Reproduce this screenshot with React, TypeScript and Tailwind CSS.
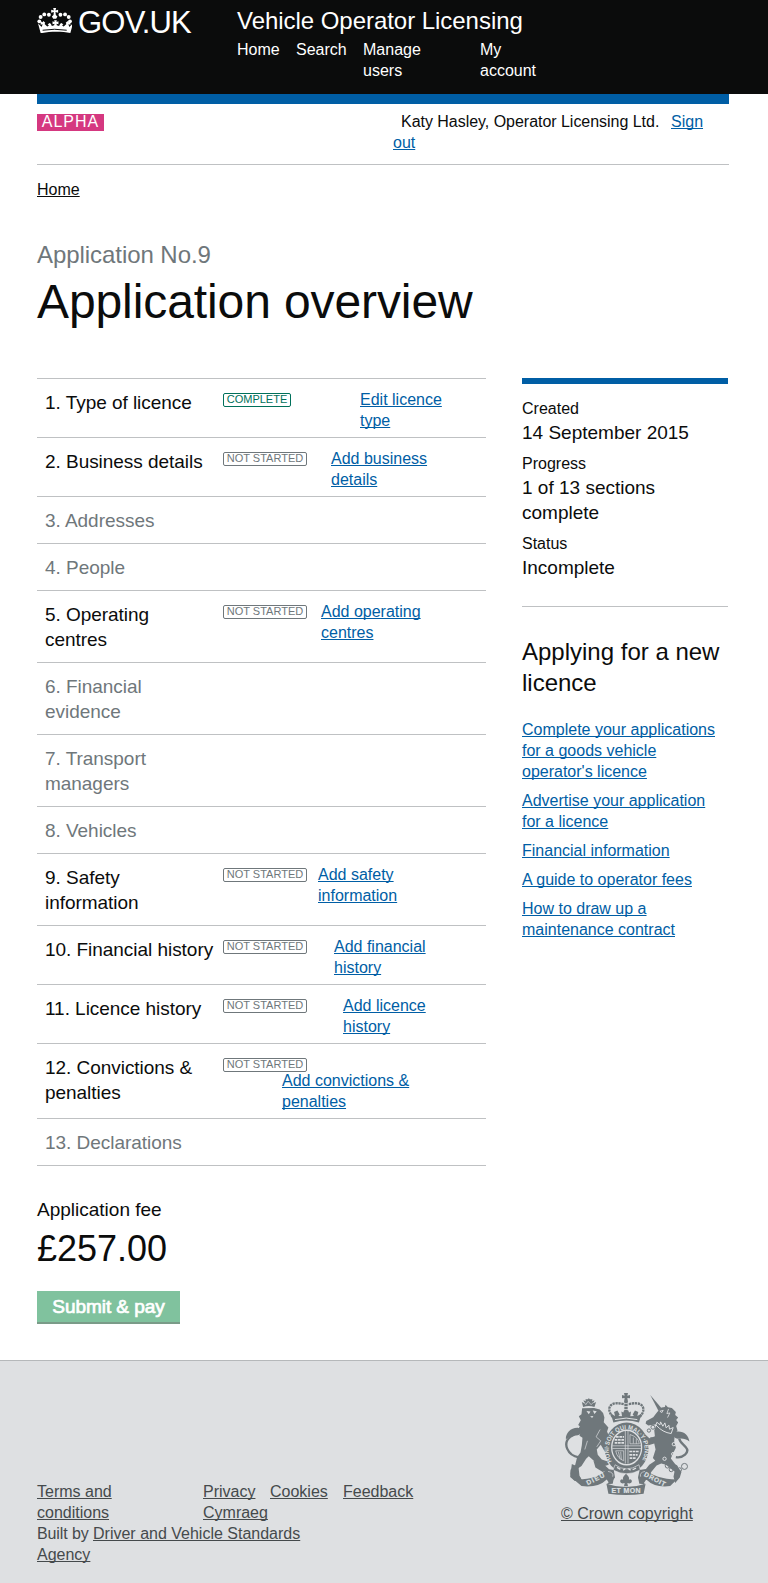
import React from "react";

const link = "text-[#005ea5] underline decoration-1 underline-offset-[1px] [text-decoration-skip-ink:none]";
const footLink = "underline decoration-1 underline-offset-[1px] [text-decoration-skip-ink:none]";

type Section = {
  name: string;
  status?: string;
  action?: string;
  height: string;
  indent?: string;
  stacked?: boolean;
};

const sections: Section[] = [
  { name: "1. Type of licence", status: "COMPLETE", action: "Edit licence\ntype", height: "h-[59px]", indent: "ml-[69px]" },
  { name: "2. Business details", status: "NOT STARTED", action: "Add business\ndetails", height: "h-[59px]", indent: "ml-[24px]" },
  { name: "3. Addresses", height: "h-[47px]" },
  { name: "4. People", height: "h-[47px]" },
  { name: "5. Operating\ncentres", status: "NOT STARTED", action: "Add operating\ncentres", height: "h-[72px]", indent: "ml-[14px]" },
  { name: "6. Financial\nevidence", height: "h-[72px]" },
  { name: "7. Transport\nmanagers", height: "h-[72px]" },
  { name: "8. Vehicles", height: "h-[47px]" },
  { name: "9. Safety\ninformation", status: "NOT STARTED", action: "Add safety\ninformation", height: "h-[72px]", indent: "ml-[11px]" },
  { name: "10. Financial history", status: "NOT STARTED", action: "Add financial\nhistory", height: "h-[59px]", indent: "ml-[27px]" },
  { name: "11. Licence history", status: "NOT STARTED", action: "Add licence\nhistory", height: "h-[59px]", indent: "ml-[36px]" },
  { name: "12. Convictions &\npenalties", status: "NOT STARTED", action: "Add convictions &\npenalties", height: "h-[75px]", indent: "ml-[59px]", stacked: true },
  { name: "13. Declarations", height: "h-[47px]" },
];

const guides = [
  "Complete your applications\nfor a goods vehicle\noperator's licence",
  "Advertise your application\nfor a licence",
  "Financial information",
  "A guide to operator fees",
  "How to draw up a\nmaintenance contract",
];

function CrownLogo() {
  return (
    <svg viewBox="110 24 106 78" className="h-[26px] w-[35px] shrink-0" fill="#fff">
      <circle cx="117" cy="64" r="5.8" />
      <circle cx="121" cy="51" r="5.8" />
      <circle cx="132" cy="43" r="5.8" />
      <circle cx="146" cy="44" r="5.8" />
      <circle cx="181" cy="44" r="5.8" />
      <circle cx="195" cy="43" r="5.8" />
      <circle cx="206" cy="51" r="5.8" />
      <circle cx="210" cy="64" r="5.8" />
      <path d="M159 24h9l-2 7 8-2v9l-8-2 1 9 5 4-4 7h-9l-4-7 5-4 1-9-8 2v-9l8 2z" />
      <path d="M121 99 113 70l11 11 3-8-6 1v-9l6 2 2-4 6 5-2 4 8 8 6-3-5-2 5-6 5 2 3 7 7-2 1-5-6 2v-9l6 2-1-5h8l-1 5 6-2v9l-6-2 1 5 7 2 3-7 5-2 5 6-5 2 6 3 8-8-2-4 6-5 2 4 6-2v9l-6-1 3 8 11-11-8 29c-24-5-61-5-85 0z" />
      <path d="M127 91q36-6 73 0" stroke="#0b0c0c" strokeWidth="3" fill="none" />
    </svg>
  );
}

function RoyalArms() {
  return (
    <svg viewBox="75 68 375 307" className="h-[102px] w-[125px]" fill="#6f777b">
      {/* lion */}
      <path d="M129 110l-4-15 8 4-3-9 7 3-1-6h8l2-4 3 4h8l-1 6 7-3-3 9 8-4-5 15q-17-5-34 0z" />
      <path d="M131 95l6 8 7-10 9 10 8-8" fill="none" stroke="#dee0e2" strokeWidth="2" />
      <path d="M126 114l36-1 17 5 10 10 4 14-2 14 14 16-4 12 6 16-6 8-3 16 8 14-12 6-12-20-12 14 3 16 12 14 18 6 3 10-12 4-22-6-26-24-8 8-14 22-12 8-4 16 14 12-4 9-14 0-14-12 1-22 14-14 6-24 10-14 4-22 2-22-9-6 4-16-10-1 7-12-5-4 8-14-6-12 8-6z" />
      <path d="M116 262c-34-6-50-42-26-62 20-12 28-18 27-25" fill="none" stroke="#6f777b" strokeWidth="7" />
      <path d="M77 208c-1-20 16-37 38-35 14 5 10 18-2 22-16 2-24 2-36 13z" />
      <path d="M95 282l-4 30 10 18 26 3-9-16-3-26zM160 272l30 10 18 16-20 8-22-14z" />
      <path d="M139 122l12 2-5 8zM158 121l12 2-7 8zM150 138l10-1-4 6z" fill="#dee0e2" />
      <path d="M180 178l-12 22 14 12-12 18M142 212l-8 26" fill="none" stroke="#dee0e2" strokeWidth="2" />
      {/* unicorn */}
      <path d="M331 74l34 40-9 8z" />
      <path d="M340 141l12-16 13-13 10-2 2-7 7 8 12 2 12 12-2 9 9 8-6 7 6 8-6 10 4 14-8 10-2 22 5 20-10 20-5 12 14 18 18 22-5 17-14 17-5-19 3-16-26-20-14-4-14 6-16 20-14 24-12-1 6-27 14-18 18-12-7-8 8-26-4-18-20 6-16-10-8-22 18 0 12 11 16-7-2-18 8-18-26 4-8-6 2-8z" />
      <path d="M408 261c20 4 44-14 30-30-9-10-18-15-20-26" fill="none" stroke="#6f777b" strokeWidth="7" />
      <path d="M449 214c-3-20-18-33-40-30-12 6-10 18 4 22 16-2 24 0 36 8z" />
      <path d="M351 156l9 8 2-9 7 13 6-10 4 15 8-8 2 12 11-5-6 18q-26-3-46-26z" stroke="#dee0e2" strokeWidth="3" />
      <path d="M360 123l10-3-4 7zM386 116l-5 14 9-2-7 14" fill="none" stroke="#dee0e2" strokeWidth="2.5" />
      <g fill="none" stroke="#dee0e2" strokeWidth="3">
        <circle cx="402" cy="222" r="5" />
        <circle cx="400" cy="252" r="5" />
        <circle cx="374" cy="266" r="5" />
      </g>
      <g fill="none" stroke="#6f777b" strokeWidth="3">
        <circle cx="339" cy="171" r="6" />
        <circle cx="327" cy="181" r="5" />
        <circle cx="335" cy="208" r="6" />
        <circle cx="383" cy="287" r="7" />
        <circle cx="394" cy="299" r="6" />
        <circle cx="407" cy="291" r="6" />
        <circle cx="419" cy="299" r="6" />
        <circle cx="434" cy="289" r="9" />
      </g>
      {/* crown */}
      <path d="M252 68h12l-2 8 8-2v10l-8-1 2 11h-12l2-11-8 1v-10l8 2z" />
      <g fill="none" stroke="#6f777b" strokeWidth="7">
        <path d="M218 140c-22-26-8-50 34-38M300 140c22-26 8-50-36-38" strokeDasharray="7 2" />
        <path d="M258 92v36" strokeWidth="10" strokeDasharray="7 2" />
      </g>
      <path d="M220 157l-8-27 13 7-3-12 10-4 7 12-4 4 11 1-2-14 6 3 2-6h13l2 6 6-3-2 14 11-1-4-4 7-12 10 4-3 12 13-7-8 27q-38-13-77 0z" />
      <path d="M225 148q34-9 67 0" fill="none" stroke="#dee0e2" strokeWidth="3" />
      {/* garter and shield */}
      <ellipse cx="260" cy="233" rx="66" ry="76" />
      <ellipse cx="260" cy="232" rx="45" ry="52" fill="none" stroke="#dee0e2" strokeWidth="4" />
      <g fill="none" stroke="#dee0e2" strokeWidth="5">
        <path d="M256 182v98M264 182v98M217 227h86M217 235h86" strokeWidth="2" />
        <path d="M228 200h24M224 209h28M224 218h28M268 244h28M268 254h25M269 264h18" strokeDasharray="8 2" />
        <path d="M270 193v28h28q-2-20-28-28zM227 242h24v30q-20-8-24-30zM235 245l5 21M242 245l2 24M280 202v18M289 205v16" strokeWidth="2" />
      </g>
      <path id="garter" d="M215 274A54 62 0 1 1 305 274" fill="none" />
      <text fill="#dee0e2" fontSize="19" fontWeight="700" fontFamily="Liberation Sans, sans-serif">
        <textPath href="#garter" textLength="250" lengthAdjust="spacingAndGlyphs">HONI·SOIT QUI MAL·Y·PENSE</textPath>
      </text>
      <path d="M225 284q34 25 72 0l4 16q-42 22-82 0z" stroke="#dee0e2" strokeWidth="2" />
      <path d="M231 292l10 6M278 299l10-5M249 300l7-4M265 296l7 4" stroke="#dee0e2" strokeWidth="4" />
      {/* fleur-de-lis */}
      <path d="M258 311q17 15 4 22 10-11 14 0-1 10-14 6l2 10h-12l2-10q-13 4-14-6 4-11 14 0-13-7 4-22z" />
      {/* motto ribbons */}
      <path d="M101 328q70 3 100-31l20 3 4 22-16 20-9-14q-26 26-76 20zM411 328q-66 0-94-31l-18 3-5 22 16 20 9-14q26 26 72 20z" />
      <path d="M199 341q59 20 118 0l-6 30q-53 8-106 0zM200 343l22-22-4 20zM316 343l-22-22 4 20z" />
      <path d="M204 304q18 3 14 16M315 304q-17 3-13 16" fill="none" stroke="#dee0e2" strokeWidth="2" />
      <g fill="#dee0e2" stroke="#dee0e2" strokeWidth="0.6" fontWeight="700" fontFamily="Liberation Sans, sans-serif">
        <text x="143" y="346" fontSize="20" textLength="58" transform="rotate(-27 143 346)">DIEU</text>
        <text x="311" y="317" fontSize="20" textLength="70" transform="rotate(28 311 317)">DROIT</text>
        <text x="214" y="370" fontSize="21" textLength="88">ET MON</text>
      </g>
    </svg>
  );
}

function SectionRow({ section }: { section: Section }) {
  const complete = section.status === "COMPLETE";
  return (
    <li className={`flex border-t border-[#bfc1c3] pl-2 ${section.height}`}>
      <div className={`w-[178px] shrink-0 pt-[11px] text-[19px] leading-[25px] tracking-[-0.04px] whitespace-pre ${section.status ? "" : "text-[#6f777b]"}`}>
        {section.name}
      </div>
      {section.status && (
        <div className={section.stacked ? "flex flex-col items-start" : "flex items-start"}>
          <span
            className={`mt-[14px] flex h-[14px] shrink-0 justify-center rounded-[2px] border text-[11px] leading-[11px] ${
              complete ? "w-[68px] border-[#00705a] text-[#00705a]" : "w-[84px] border-[#6f777b] text-[#6f777b]"
            }`}
          >
            {section.status}
          </span>
          <a href="#" className={`whitespace-pre ${section.stacked ? "-mt-[2px]" : "mt-[10px]"} ${section.indent} ${link}`}>
            {section.action}
          </a>
        </div>
      )}
    </li>
  );
}

export default function App() {
  return (
    <div className="flex h-[1583px] w-[768px] flex-col bg-white font-['Liberation_Sans',Arial,sans-serif] text-[16px] leading-[21px] text-[#0b0c0c]">
      <header className="flex h-[94px] shrink-0 bg-[#0b0c0c] pl-[37px] text-white">
        <a href="#" className="flex w-[200px] pt-2">
          <CrownLogo />
          <span className="ml-[6px] text-[31px] leading-[30px] tracking-[-0.8px]">GOV.UK</span>
        </a>
        <div className="pt-[6px]">
          <div className="text-[24px] leading-[30px] tracking-[-0.04px]">Vehicle Operator Licensing</div>
          <nav className="mt-[3px] flex">
            <a href="#" className="w-[59px]">Home</a>
            <a href="#" className="w-[67px]">Search</a>
            <a href="#" className="w-[117px] whitespace-pre">{"Manage\nusers"}</a>
            <a href="#" className="whitespace-pre">{"My\naccount"}</a>
          </nav>
        </div>
      </header>

      <div className="mr-[39px] ml-[37px]">
        <div className="flex h-[71px] border-t-[10px] border-b border-t-[#005ea5] border-b-[#bfc1c3]">
          <div className="w-[356px] pt-[10px]">
            <strong className="flex h-[17px] w-[67px] items-center justify-center bg-[#d53880] pb-[2px] text-[16px] leading-[15px] font-normal tracking-[1px] text-white">ALPHA</strong>
          </div>
          <div className="pt-[7px]">
            <div className="flex">
              <span className="ml-2 w-[270px] tracking-[-0.03px]">Katy Hasley, Operator Licensing Ltd.</span>
              <a href="#" className={link}>Sign</a>
            </div>
            <a href="#" className={link}>out</a>
          </div>
        </div>
        <div className="mt-[14px]">
          <a href="#" className={footLink}>Home</a>
        </div>
        <div className="mt-[40px] text-[24px] leading-[30px] tracking-[-0.06px] text-[#6f777b]">Application No.9</div>
        <h1 className="mt-[7px] text-[48px] leading-[50px] tracking-[-0.1px]">Application overview</h1>
      </div>

      <div className="mt-[51px] ml-[37px] flex">
        <main className="w-[449px]">
          <ol className="border-b border-[#bfc1c3]">
            {sections.map((s) => (
              <SectionRow key={s.name} section={s} />
            ))}
          </ol>
          <div className="mt-[31px] text-[19px] leading-[25px]">Application fee</div>
          <div className="mt-[7px] text-[36px] leading-[40px]">£257.00</div>
          <button className="mt-[22px] block h-[33px] w-[143px] border-b-2 border-[#7a9b88] bg-[#80c29e] text-[19px] leading-[30px] tracking-[-0.05px] text-white [-webkit-text-stroke:0.7px_white]">
            Submit &amp; pay
          </button>
        </main>

        <aside className="ml-[36px] w-[206px]">
          <dl className="h-[229px] border-t-[6px] border-b border-t-[#005ea5] border-b-[#bfc1c3] pt-[14px]">
            <dt>Created</dt>
            <dd className="mt-[1px] mb-[8px] text-[19px] leading-[25px]">14 September 2015</dd>
            <dt>Progress</dt>
            <dd className="mt-[1px] mb-[8px] text-[19px] leading-[25px] whitespace-pre">{"1 of 13 sections\ncomplete"}</dd>
            <dt>Status</dt>
            <dd className="mt-[1px] text-[19px] leading-[25px]">Incomplete</dd>
          </dl>
          <h2 className="mt-[29px] text-[24px] leading-[31px] whitespace-pre">{"Applying for a new\nlicence"}</h2>
          <ul className="mt-[21px] flex flex-col gap-2">
            {guides.map((g) => (
              <li key={g} className="whitespace-pre">
                <a href="#" className={link}>{g}</a>
              </li>
            ))}
          </ul>
        </aside>
      </div>

      <footer className="mt-auto flex h-[223px] shrink-0 border-t border-[#b5b8ba] bg-[#dee0e2] pl-[37px] text-[#454a4c]">
        <div className="w-[524px] pt-[120px]">
          <div className="flex">
            <a href="#" className={`w-[166px] whitespace-pre ${footLink}`}>{"Terms and\nconditions"}</a>
            <div>
              <div className="flex">
                <span className="w-[67px]"><a href="#" className={footLink}>Privacy</a></span>
                <span className="w-[73px]"><a href="#" className={footLink}>Cookies</a></span>
                <a href="#" className={footLink}>Feedback</a>
              </div>
              <a href="#" className={footLink}>Cymraeg</a>
            </div>
          </div>
          <div className="whitespace-pre">
            <span className="tracking-[-0.1px]">Built by </span>
            <a href="#" className={footLink}>{"Driver and Vehicle Standards\nAgency"}</a>
          </div>
        </div>
        <div className="pt-[32px]">
          <div className="ml-[4px]">
            <RoyalArms />
          </div>
          <a href="#" className={`mt-[8px] block ${footLink}`}>© Crown copyright</a>
        </div>
      </footer>
    </div>
  );
}
